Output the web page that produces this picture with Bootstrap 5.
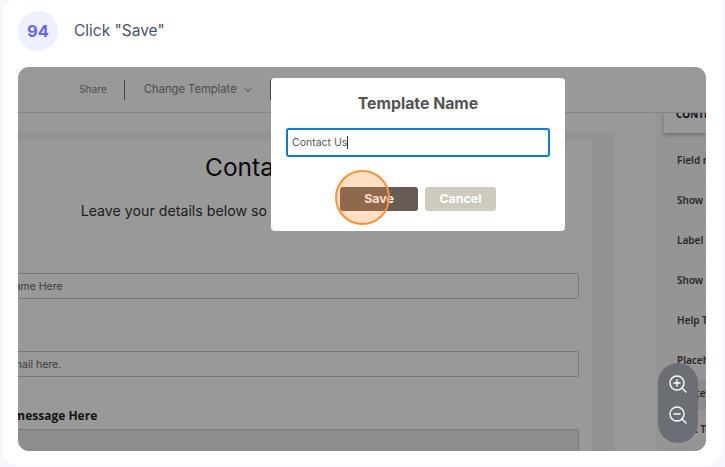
<!DOCTYPE html>
<html lang="en">
<head>
  <meta charset="UTF-8" />
  <title>Step 94 - Click Save</title>
  <meta name="viewport" content="width=device-width, initial-scale=1" />
  <link href="https://cdn.jsdelivr.net/npm/bootstrap@5.3.2/dist/css/bootstrap.min.css" rel="stylesheet" />
  <style>
    html, body { height: 467px; overflow: hidden; }
    body { background: #f5f6fe; padding: 0 3px 1px 2px; font-family: "Inter", "Liberation Sans", sans-serif; }
    .step-card { height: 466px; border: 0; border-radius: 0 0 18px 18px; border-top-left-radius: 12px; padding: 11px 16px 15px; }
    .step-num { width: 40px; height: 40px; background: #eef0fe; color: #6668e6; font-size: 16.5px; font-weight: 700; }
    .step-title { font-size: 15.5px; color: #4a5368; margin-left: 16px; }
    .shot { height: 384px; margin-top: 16px; border-radius: 11px; overflow: hidden; position: relative; background: #fff; }
    .shot-page { height: 100%; color: #222; }
    .shot-bar { height: 46px; border-bottom: 1px solid #dcdcdc; padding-left: 61px; font-size: 11.2px; color: #7f7f7f; }
    .bar-share { font-size: 10.2px; }
    .bar-sep { width: 1px; height: 20px; background: #777; margin: 0 19px 0 17px; }
    .chev { width: 8px; height: 8px; margin-left: 7px; }
    .bar-sep2 { margin-left: 18px; }
    .shot-body { height: 338px; }
    .form-wrap { width: 597px; padding-top: 19px; flex: none; }
    .form-shade { background: #f6f6f6; height: 100%; margin-left: -60px; padding-top: 8px; padding-right: 23px; width: 657px; }
    .form-paper { background: #fff; height: 100%; padding: 12px 13px 0 2px; }
    .form-head { font-size: 24.5px; font-weight: 400; line-height: 30px; color: #111; }
    .form-sub { font-size: 14.2px; line-height: 20px; margin-top: 19px; padding-left: 4px; white-space: nowrap; color: #333; }
    .fake-input { height: 26px; border: 1px solid #c9c9c9; border-radius: 2px; font-size: 10.5px; color: #666; padding: 2px 0 0 20px; }
    .fi-1 { margin-top: 52px; }
    .fi-2 { margin-top: 52px; }
    .fi-3 { margin-top: 4px; background: #ececec; }
    .form-label-b { font-family: "Open Sans", sans-serif; font-size: 12px; font-weight: 700; margin-top: 30px; padding-left: 22px; line-height: 18px; color: #222; }
    .side-panel { flex: 1; margin-left: 40px; background: #f8f8f8; padding-left: 9px; font-family: "Noto Sans", sans-serif; font-size: 10px; font-weight: 600; color: #444; white-space: nowrap; overflow: hidden; }
    .side-tab { height: 20px; background: #fff; box-shadow: 0 2px 4px rgba(0,0,0,.25); padding-left: 12px; font-weight: 700; color: #222; line-height: 3px; }
    .side-row { height: 40px; border-bottom: 1px solid #eee; padding-left: 13px; }
    .side-row.first { height: 48px; padding-top: 8px; }
    .side-row.hi { background: #e8e8e8; height: 29px; border: 0; padding-bottom: 5px; }
    .dim { position: absolute; inset: 0; background: rgba(0,0,0,.4); }
    .name-modal { position: absolute; left: 253px; top: 11px; width: 294px; height: 153px; border: 0; border-radius: 4px; padding: 16px 15px 0; }
    .name-title { font-size: 15.8px; font-weight: 700; color: #555; line-height: 20px; margin-bottom: 14px; }
    .name-input { height: 29px; border: 2px solid #0a80c6; border-radius: 3px; box-shadow: 0 0 1px #7fbde4; font-size: 10.5px; color: #555; padding: 0 4px; }
    .caret-bar { width: 1px; height: 13px; background: #333; }
    .name-btns { margin-top: 30px; gap: 7px; }
    .name-btns .btn { height: 24px; padding: 0; border: 0; border-radius: 3px; font-size: 12.4px; font-weight: 700; color: #fff; }
    .btn-save { width: 78px; background: #665c55; }
    .btn-cancel { width: 71px; background: #cdcabe; }
    .spot { position: absolute; left: 317px; top: 103px; width: 55px; height: 55px; border-radius: 50%; border: 2px solid #f8923a; background: rgba(255,136,50,.28); }
    .zoom-pill { position: absolute; left: 640px; top: 296px; width: 40px; height: 80px; border-radius: 20px; background: #6b6f75; padding: 11px 0; gap: 11px; }
    .zoom-pill svg { width: 20px; height: 20px; }
  </style>
</head>
<body>
  <div class="card step-card">
    <div class="d-flex align-items-center">
      <div class="step-num rounded-circle d-flex align-items-center justify-content-center">94</div>
      <div class="step-title">Click "Save"</div>
    </div>
    <div class="shot">
      <div class="shot-page">
        <div class="shot-bar d-flex align-items-center">
          <span class="bar-share">Share</span>
          <span class="bar-sep"></span>
          <span>Change Template</span>
          <svg class="chev" viewBox="0 0 8 8" fill="none" stroke="#7f7f7f" stroke-width="1"><path d="M1 2.5 4 5.5 7 2.5" /></svg>
          <span class="bar-sep bar-sep2"></span>
        </div>
        <div class="shot-body d-flex">
          <div class="form-wrap">
            <div class="form-shade">
              <div class="form-paper">
                <div class="form-head text-center">Contact Us</div>
                <div class="form-sub text-center">Leave your details below so our team can get back soon.</div>
                <div class="fake-input fi-1 d-flex align-items-center">Your Name Here</div>
                <div class="fake-input fi-2 d-flex align-items-center">Your email here.</div>
                <div class="form-label-b">Your message Here</div>
                <div class="fake-input fi-3"></div>
              </div>
            </div>
          </div>
          <div class="side-panel">
            <div class="side-tab">CONTENT</div>
            <div class="side-row first d-flex align-items-center">Field name</div>
            <div class="side-row d-flex align-items-center">Show label</div>
            <div class="side-row d-flex align-items-center">Label</div>
            <div class="side-row d-flex align-items-center">Show help</div>
            <div class="side-row d-flex align-items-center">Help Text</div>
            <div class="side-row d-flex align-items-center">Placeholder</div>
            <div class="side-row hi d-flex align-items-center">Center</div>
            <div class="side-row d-flex align-items-center">Link To</div>
          </div>
        </div>
      </div>
      <div class="dim"></div>
      <div class="card name-modal">
        <div class="name-title text-center">Template Name</div>
        <div class="name-input d-flex align-items-center">Contact Us<span class="caret-bar"></span></div>
        <div class="name-btns d-flex justify-content-center">
          <button type="button" class="btn btn-save">Save</button>
          <button type="button" class="btn btn-cancel">Cancel</button>
        </div>
      </div>
      <div class="spot"></div>
      <div class="zoom-pill d-flex flex-column align-items-center">
        <svg viewBox="0 0 20 20" fill="none" stroke="#fff" stroke-width="1.4" stroke-linecap="round"><circle cx="9" cy="9" r="7" /><path d="M14 14 18 18M9 6v6M6 9h6" /></svg>
        <svg viewBox="0 0 20 20" fill="none" stroke="#fff" stroke-width="1.4" stroke-linecap="round"><circle cx="9" cy="9" r="7" /><path d="M14 14 18 18M6 9h6" /></svg>
      </div>
    </div>
  </div>
  <script src="https://cdn.jsdelivr.net/npm/bootstrap@5.3.2/dist/js/bootstrap.bundle.min.js"></script>
</body>
</html>
